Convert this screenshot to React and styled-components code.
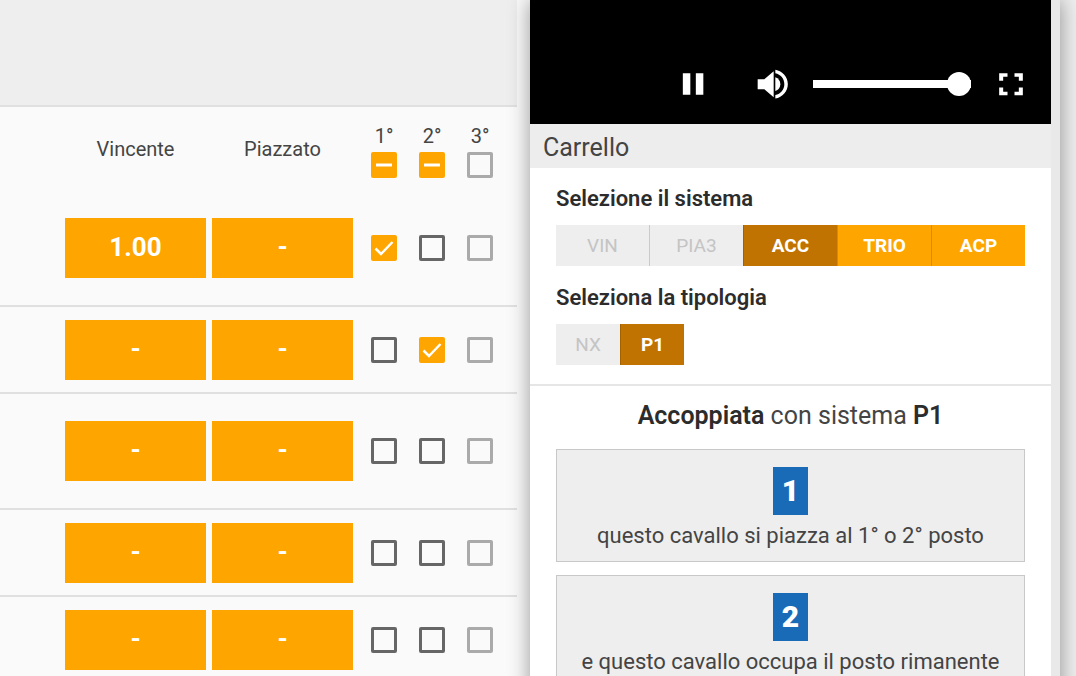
import React, { useState } from "react";
import styled, { createGlobalStyle, css } from "styled-components";

const colors = {
  amber: "#ffa500",
  amberDark: "#c07300",
  blue: "#1a6bb7",
  gray0: "#fafafa",
  gray1: "#eeeeee",
  gray2: "#e0e0e0",
  gray3: "#c8c8c8",
  text: "#444444",
  textDark: "#2c2c2c",
};

const columns = ["1°", "2°", "3°"];

const initialRows = [
  { id: 1, win: "1.00", place: "-", picks: [true, false, false], tall: true },
  { id: 2, win: "-", place: "-", picks: [false, true, false] },
  { id: 3, win: "-", place: "-", picks: [false, false, false], tall: true },
  { id: 4, win: "-", place: "-", picks: [false, false, false] },
  { id: 5, win: "-", place: "-", picks: [false, false, false] },
];

const systems = [
  { name: "VIN", disabled: true },
  { name: "PIA3", disabled: true },
  { name: "ACC" },
  { name: "TRIO" },
  { name: "ACP" },
];

const types = [{ name: "NX", disabled: true }, { name: "P1" }];

const slots = [
  { number: 1, text: "questo cavallo si piazza al 1° o 2° posto" },
  { number: 2, text: "e questo cavallo occupa il posto rimanente" },
];

function Check({ label, checked, mixed, disabled, onChange }) {
  return (
    <CheckLabel>
      <input
        type="checkbox"
        aria-label={label}
        checked={checked}
        disabled={disabled}
        onChange={onChange}
        ref={(el) => {
          if (el) el.indeterminate = Boolean(mixed);
        }}
      />
      {mixed && (
        <svg viewBox="0 0 26 26">
          <path d="M5 13h16" strokeWidth="3" />
        </svg>
      )}
      {checked && !mixed && (
        <svg viewBox="0 0 26 26">
          <path d="M4.500 13.500l5.500 5.500L21.500 7" strokeWidth="2.500" />
        </svg>
      )}
    </CheckLabel>
  );
}

function Races() {
  const [rows, setRows] = useState(initialRows);

  const toggle = (id, index) =>
    setRows(
      rows.map((row) =>
        row.id === id
          ? { ...row, picks: row.picks.map((p, i) => (i === index ? !p : p)) }
          : row
      )
    );

  // the head checkbox clears its whole column
  const clear = (index) =>
    setRows(
      rows.map((row) => ({
        ...row,
        picks: row.picks.map((p, i) => (i === index ? false : p)),
      }))
    );

  return (
    <Board>
      <Banner />
      <Table>
        <colgroup>
          <col className="space" />
          <col className="odd" />
          <col className="odd" />
          <col className="gutter" />
          <col className="pick" />
          <col className="pick" />
          <col className="pick" />
          <col className="end" />
        </colgroup>
        <thead>
          <tr>
            <td />
            <th scope="col">Vincente</th>
            <th scope="col">Piazzato</th>
            <td />
            {columns.map((name, index) => (
              <th scope="col" key={name}>
                <PickHead>
                  {name}
                  <Check
                    label={`Tutti ${name}`}
                    checked={false}
                    mixed={rows.some((row) => row.picks[index])}
                    disabled={index === 2}
                    onChange={() => clear(index)}
                  />
                </PickHead>
              </th>
            ))}
            <td />
          </tr>
        </thead>
        <tbody>
          {rows.map((row) => (
            <Row key={row.id} $tall={row.tall}>
              <td />
              <td>
                <Odd type="button">{row.win}</Odd>
              </td>
              <td>
                <Odd type="button">{row.place}</Odd>
              </td>
              <td />
              {row.picks.map((picked, index) => (
                <td key={columns[index]}>
                  <Check
                    label={`Cavallo ${row.id}, ${columns[index]}`}
                    checked={picked}
                    disabled={index === 2}
                    onChange={() => toggle(row.id, index)}
                  />
                </td>
              ))}
              <td />
            </Row>
          ))}
        </tbody>
      </Table>
    </Board>
  );
}

function Player() {
  const [volume, setVolume] = useState(100);

  return (
    <Video>
      <PauseButton type="button" aria-label="Pausa">
        <svg viewBox="0 0 24 24">
          <path d="M5.900 5.500h4.500v13h-4.500zM13.700 5.500h4.500v13h-4.500z" />
        </svg>
      </PauseButton>
      <IconButton type="button" aria-label="Audio">
        <svg viewBox="0 0 24 24">
          <path d="M2.800 9.200v5.900h4l5.600 4.900V4.300L6.800 9.200z" />
          <path d="M16.400 12.100c0-1.900-1.100-3.400-3-4.100v8.200c1.900-.7 3-2.200 3-4.100z" />
          <path d="M13.400 3.500v2.100c3.200.7 5.400 3.300 5.400 6.500s-2.200 5.800-5.400 6.500v2.100c4.300-.8 7.500-4.300 7.500-8.600s-3.200-7.800-7.500-8.600z" />
        </svg>
      </IconButton>
      <Volume
        type="range"
        aria-label="Volume"
        value={volume}
        onChange={(e) => setVolume(e.target.value)}
      />
      <IconButton type="button" aria-label="Schermo intero">
        <svg viewBox="0 0 24 24">
          <path d="M7.300 14.100H4.900v4.700h5v-2.200H7.300zM4.900 10.100h2.400V7.700h2.600V5.500h-5zM16.700 16.600h-2.600v2.200h5v-4.700h-2.400zM14.100 5.500v2.200h2.600v2.400h2.400V5.500z" />
        </svg>
      </IconButton>
    </Video>
  );
}

function Choice({ title, options, value, onChange, compact }) {
  return (
    <div>
      <GroupTitle>{title}</GroupTitle>
      <ButtonGroup role="group" aria-label={title}>
        {options.map(({ name, disabled }) => (
          <GroupButton
            key={name}
            type="button"
            disabled={disabled}
            aria-pressed={name === value}
            $active={name === value}
            $compact={compact}
            onClick={() => onChange(name)}
          >
            {name}
          </GroupButton>
        ))}
      </ButtonGroup>
    </div>
  );
}

export default function App() {
  const [system, setSystem] = useState("ACC");
  const [type, setType] = useState("P1");

  return (
    <Page>
      <GlobalStyle />
      <Races />
      <Sidebar>
        <Player />
        <CartTitle>Carrello</CartTitle>
        <Choices>
          <Choice
            title="Selezione il sistema"
            options={systems}
            value={system}
            onChange={setSystem}
          />
          <Choice
            title="Seleziona la tipologia"
            options={types}
            value={type}
            onChange={setType}
            compact
          />
        </Choices>
        <Bet>
          <BetTitle>
            <strong>Accoppiata</strong> con sistema <strong>{type}</strong>
          </BetTitle>
          {slots.map((slot) => (
            <Slot key={slot.number}>
              <Badge>{slot.number}</Badge>
              <span>{slot.text}</span>
            </Slot>
          ))}
        </Bet>
      </Sidebar>
    </Page>
  );
}

const GlobalStyle = createGlobalStyle`
  * {
    box-sizing: border-box;
  }

  body {
    margin: 0;
    background: ${colors.gray1};
    color: ${colors.text};
    font-family: Roboto, "Liberation Sans", sans-serif;
  }

  button {
    border: 0;
    padding: 0;
    font-family: inherit;
    cursor: pointer;
  }
`;

const Page = styled.div`
  display: grid;
  grid-template-columns: minmax(0, 1fr) minmax(0, 1fr) 16px;
  height: 100vh;
  overflow: hidden;
`;

const Board = styled.main`
  background: ${colors.gray0};
`;

const Banner = styled.div`
  height: 107px;
  margin-right: 13px;
  background: ${colors.gray1};
  border-bottom: 2px solid ${colors.gray2};
`;

const Table = styled.table`
  width: calc(100% - 13px);
  table-layout: fixed;
  border-collapse: separate;
  border-spacing: 0;

  .odd {
    width: 147px;
  }

  .gutter {
    width: 4px;
  }

  .pick {
    width: 48px;
  }

  .end {
    width: 13px;
  }

  th,
  td {
    padding: 0;
  }

  thead tr {
    height: 84px;
  }

  th {
    font-size: 20px;
    font-weight: 400;
  }
`;

const Row = styled.tr`
  height: ${({ $tall }) => ($tall ? 116 : 87)}px;

  td {
    border-bottom: 2px solid ${colors.gray2};
  }
`;

const Odd = styled.button`
  display: block;
  width: calc(100% - 6px);
  height: 60px;
  margin: 0 auto;
  padding-bottom: 2px;
  background: ${colors.amber};
  color: #fff;
  font-size: 26px;
  font-weight: 700;
`;

const PickHead = styled.div`
  display: flex;
  flex-direction: column;
  gap: 4px;
  padding-top: 4px;
  line-height: 24px;
`;

const CheckLabel = styled.label`
  display: grid;
  justify-content: center;

  input,
  svg {
    grid-area: 1 / 1;
    width: 26px;
    height: 26px;
    margin: 0;
  }

  input {
    appearance: none;
    border: 3px solid #666;
    border-radius: 2px;
  }

  input:checked,
  input:indeterminate {
    border-color: ${colors.amber};
    background: ${colors.amber};
  }

  input:disabled {
    border-color: #aaa;
  }

  svg {
    fill: none;
    stroke: #fff;
    pointer-events: none;
  }
`;

const Sidebar = styled.aside`
  z-index: 1;
  background: #fff;
  border-right: 9px solid #e9e9e9;
  box-shadow: 0 0 20px rgba(0, 0, 0, 0.4);
`;

const Video = styled.div`
  display: flex;
  align-items: flex-end;
  justify-content: flex-end;
  gap: 20px;
  height: 124px;
  padding: 20px;
  background: #000;
`;

const IconButton = styled.button`
  width: 40px;
  height: 40px;
  background: none;

  svg {
    display: block;
    fill: #fff;
  }
`;

const PauseButton = styled(IconButton)`
  margin-right: 20px;
`;

const Volume = styled.input`
  appearance: none;
  width: 158px;
  height: 40px;
  margin: 0;
  background: none;

  &::-webkit-slider-runnable-track {
    height: 8px;
    background: #fff;
  }

  &::-webkit-slider-thumb {
    appearance: none;
    width: 24px;
    height: 24px;
    margin-top: -8px;
    border-radius: 50%;
    background: #fff;
  }
`;

const CartTitle = styled.h2`
  margin: 0;
  padding: 3px 13px 0;
  background: #ededed;
  font-size: 25px;
  font-weight: 400;
  line-height: 41px;
`;

const Choices = styled.section`
  display: flex;
  flex-direction: column;
  gap: 17px;
  padding: 16px 26px 19px;
  border-bottom: 2px solid #e6e6e6;
`;

const GroupTitle = styled.h3`
  margin: 0 0 12px;
  color: ${colors.textDark};
  font-size: 22px;
  font-weight: 600;
  line-height: 29px;
`;

const ButtonGroup = styled.div`
  display: flex;
`;

const GroupButton = styled.button`
  flex: ${({ $compact }) => ($compact ? "0 0 64px" : "1 1 0")};
  height: 41px;
  background: ${colors.amber};
  color: #fff;
  font-size: 19px;
  font-weight: 700;

  & + & {
    border-left: 1px solid rgba(0, 0, 0, 0.15);
  }

  &:disabled {
    background: ${colors.gray1};
    color: #c4c4c4;
    font-weight: 400;
  }

  ${({ $active }) =>
    $active &&
    css`
      background: ${colors.amberDark};
    `}
`;

const Bet = styled.section`
  display: flex;
  flex-direction: column;
  gap: 13px;
  padding: 14px 26px;
`;

const BetTitle = styled.h3`
  margin: 0 0 4px;
  font-size: 25px;
  font-weight: 400;
  line-height: 32px;
  text-align: center;

  strong {
    font-weight: 600;
    color: ${colors.textDark};
  }
`;

const Slot = styled.div`
  display: flex;
  flex-direction: column;
  align-items: center;
  gap: 6px;
  padding: 17px 8px 10px;
  border: 1px solid ${colors.gray3};
  background: ${colors.gray1};
  font-size: 22px;
  line-height: 30px;
`;

const Badge = styled.b`
  width: 35px;
  background: ${colors.blue};
  color: #fff;
  font-size: 30px;
  font-weight: 900;
  line-height: 48px;
  text-align: center;
`;
